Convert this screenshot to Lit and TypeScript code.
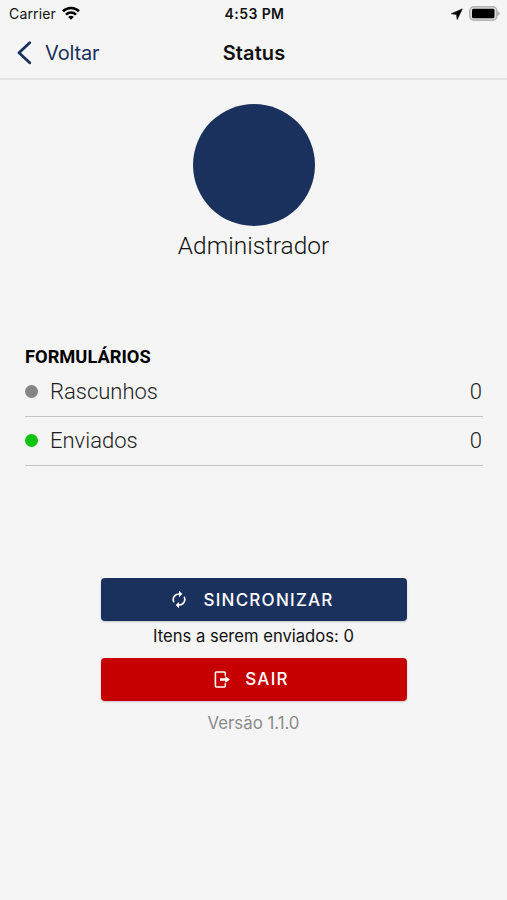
import { LitElement, html, css } from "lit";
import { customElement, property } from "lit/decorators.js";

@customElement("form-row")
class FormRow extends LitElement {
  @property() label = "";
  @property() kind = "draft";
  @property({ type: Number }) count = 0;

  static styles = css`
    :host { display: block; }
    .row {
      display: flex; align-items: center; box-sizing: border-box; height: 49px;
      padding-bottom: 2px; border-bottom: 1px solid #c4c4c4;
      font: 300 22px/30px Roboto, sans-serif; color: #1c1c1c;
    }
    .dot { width: 13px; height: 13px; border-radius: 50%; background: #858585; margin-right: 12px; }
    .sent { background: #0bc40b; }
    .label { flex: 1; padding-top: 2px; }
    .count { padding: 2px 1px 0 0; }
  `;

  render() {
    return html`<div class="row">
      <span class="dot ${this.kind}"></span>
      <span class="label">${this.label}</span>
      <span class="count">${this.count}</span>
    </div>`;
  }
}

@customElement("app-root")
class AppRoot extends LitElement {
  static styles = css`
    :host {
      display: flex; flex-direction: column; height: 900px; overflow: hidden;
      background: #f5f5f5; color: #111; font-family: Inter, sans-serif;
    }
    svg { display: block; }
    .statusbar {
      display: grid; grid-template-columns: 1fr auto 1fr; align-items: center;
      height: 27px; padding: 0 7px 0 9px; font-size: 14px; line-height: 18px;
    }
    .carrier { display: flex; align-items: center; gap: 6px; letter-spacing: 0.15px; }
    .wifi { margin-top: -2px; }
    .clock { font-weight: 600; letter-spacing: 0.4px; }
    .power { display: flex; align-items: center; justify-content: flex-end; gap: 6px; }
    .nav {
      display: grid; grid-template-columns: 1fr auto 1fr; align-items: center;
      height: 51px; padding: 0 16px; border-bottom: 2px solid #e4e4e4;
    }
    .back { display: flex; align-items: center; gap: 13px; color: #1b315d; font-size: 20px; letter-spacing: -0.15px; }
    .title { font-size: 20px; font-weight: 600; padding-left: 1px; letter-spacing: 0.1px; }
    .profile { display: flex; flex-direction: column; align-items: center; padding-top: 23.5px; }
    .avatar { width: 122px; height: 122px; border-radius: 61px; background: #1b315d; }
    .name { margin-top: 5px; font: 300 24.4px/30px Roboto, sans-serif; }
    .forms { margin: 84.5px 24px 0 25px; }
    .heading { font: 700 18.3px/24px Roboto, sans-serif; height: 23px; color: #000; }
    .actions { display: flex; flex-direction: column; align-items: center; margin-top: 112px; }
    .button {
      display: flex; align-items: center; justify-content: center; gap: 14px;
      box-sizing: border-box; padding-right: 4px;
      width: 306px; height: 43px; border-radius: 4px; color: #fff;
      font-size: 17px; font-weight: 500; letter-spacing: 1.25px;
      box-shadow: 0 1px 2px rgba(0, 0, 0, 0.2);
    }
    .sync { background: #1b315d; }
    .exit { background: #c60000; }
    .pending { font-size: 16.6px; line-height: 20px; margin: 5px 0 11.7px; }
    .version { font-size: 16.8px; line-height: 20px; margin-top: 12.3px; color: #8b8b8b; }
  `;

  render() {
    return html`
      <div class="statusbar">
        <div class="carrier">
          <span>Carrier</span>
          <svg class="wifi" width="18" height="14" viewBox="0 0 18 14" fill="none" stroke="#000" stroke-width="2.6">
            <path d="M1 5.2C5.4.9 12.6.9 17 5.2M4 8.6c2.8-2.8 7.2-2.8 10 0" />
            <path d="M9 13.7l-2.8-2.8c1.6-1.4 4-1.4 5.600 0z" fill="#000" stroke="none" />
          </svg>
        </div>
        <span class="clock">4:53 PM</span>
        <div class="power">
          <svg width="12" height="12" viewBox="0 0 12 12"><path d="M11.3.9L.3 5.700l5.200.800.700 5z" stroke="#000" stroke-width=".6" /></svg>
          <svg width="31" height="15" viewBox="0 0 31 15">
            <path d="M28 5c2 .5 2.800 1.300 2.800 2.500S30 9.500 28 10z" fill="#b3b3b3" />
            <rect x=".8" y=".8" width="27" height="13.4" rx="4" fill="#ddd" stroke="#b3b3b3" stroke-width="1.5" />
            <rect x="3" y="2.8" width="22.5" height="9.4" rx="1.5" />
          </svg>
        </div>
      </div>
      <div class="nav">
        <div class="back">
          <svg width="16" height="24" viewBox="0 0 16 24" fill="none" stroke="#1b315d" stroke-width="2.8" stroke-linecap="round" stroke-linejoin="round">
            <path d="M13.7 1.7L3 11.7l10.700 10" />
          </svg>
          <span>Voltar</span>
        </div>
        <span class="title">Status</span>
      </div>
      <div class="profile">
        <div class="avatar"></div>
        <div class="name">Administrador</div>
      </div>
      <div class="forms">
        <div class="heading">FORMULÁRIOS</div>
        <form-row label="Rascunhos" kind="draft" count="0"></form-row>
        <form-row label="Enviados" kind="sent" count="0"></form-row>
      </div>
      <div class="actions">
        <div class="button sync">
          <svg width="20" height="19" viewBox="0 0 24 24" fill="#fff" preserveAspectRatio="none">
            <path d="M12 6v3l4-4-4-4v3a8 8 0 0 0-8 8c0 1.57.46 3.03 1.24 4.26L6.7 14.8A5.87 5.87 0 0 1 6 12a6 6 0 0 1 6-6m6.76 1.74L17.3 9.2c.44.84.7 1.8.7 2.8a6 6 0 0 1-6 6v-3l-4 4 4 4v-3a8 8 0 0 0 8-8c0-1.57-.46-3.03-1.24-4.26z" />
          </svg>
          <span>SINCRONIZAR</span>
        </div>
        <div class="pending">Itens a serem enviados: 0</div>
        <div class="button exit">
          <svg width="17" height="17" viewBox="0 0 17 17">
            <path d="M11.3 4.700V1.900q0-.9-.9-.9H2.300q-.9 0-.9.9v13.200q0 .9.9.9h8.100q.9 0 .9-.9v-2.800" fill="none" stroke="#fff" stroke-width="1.6" />
            <path d="M6 7.200h5.300V5L15.900 8.500l-4.600 3.500V9.800H6z" fill="#fff" />
          </svg>
          <span>SAIR</span>
        </div>
        <div class="version">Versão 1.1.0</div>
      </div>
    `;
  }
}
